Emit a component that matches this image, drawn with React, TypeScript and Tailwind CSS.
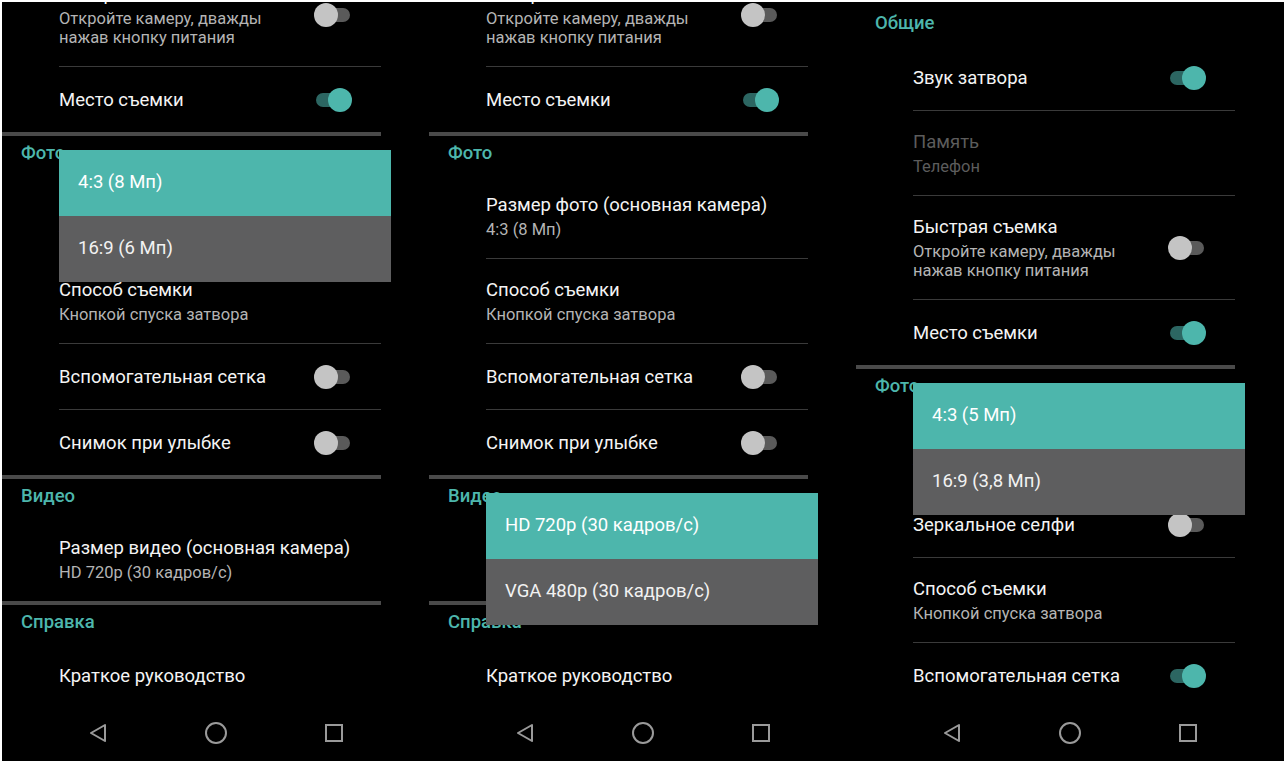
import React from 'react';

type Row = {
  title: string;
  sub?: string[];
  toggle?: 'on' | 'off';
  disabled?: boolean;
};

type Section = {
  title: string;
  rows: Row[];
};

type Screen = {
  offset: string;
  sections: Section[];
  popup: { top: string; items: string[] };
};

const font = { fontFamily: 'Roboto, "Noto Sans", "Liberation Sans", sans-serif' };

const general: Row[] = [
  { title: 'Звук затвора', toggle: 'on' },
  { title: 'Память', sub: ['Телефон'], disabled: true },
  { title: 'Быстрая съемка', sub: ['Откройте камеру, дважды', 'нажав кнопку питания'], toggle: 'off' },
  { title: 'Место съемки', toggle: 'on' },
];

const olderPhone: Section[] = [
  { title: 'Общие', rows: general },
  {
    title: 'Фото',
    rows: [
      { title: 'Размер фото (основная камера)', sub: ['4:3 (8 Мп)'] },
      { title: 'Способ съемки', sub: ['Кнопкой спуска затвора'] },
      { title: 'Вспомогательная сетка', toggle: 'off' },
      { title: 'Снимок при улыбке', toggle: 'off' },
    ],
  },
  { title: 'Видео', rows: [{ title: 'Размер видео (основная камера)', sub: ['HD 720p (30 кадров/с)'] }] },
  { title: 'Справка', rows: [{ title: 'Краткое руководство' }] },
];

const screens: Screen[] = [
  {
    offset: '-mt-[233px]',
    sections: olderPhone,
    popup: { top: 'top-[148px]', items: ['4:3 (8 Мп)', '16:9 (6 Мп)'] },
  },
  {
    offset: '-mt-[233px]',
    sections: olderPhone,
    popup: { top: 'top-[491px]', items: ['HD 720p (30 кадров/с)', 'VGA 480p (30 кадров/с)'] },
  },
  {
    offset: 'mt-0',
    sections: [
      { title: 'Общие', rows: general },
      {
        title: 'Фото',
        rows: [
          { title: 'Размер фото (основная камера)', sub: ['4:3 (5 Мп)'] },
          { title: 'Зеркальное селфи', toggle: 'off' },
          { title: 'Способ съемки', sub: ['Кнопкой спуска затвора'] },
          { title: 'Вспомогательная сетка', toggle: 'on' },
        ],
      },
    ],
    popup: { top: 'top-[381px]', items: ['4:3 (5 Мп)', '16:9 (3,8 Мп)'] },
  },
];

const Toggle = ({ on }: { on: boolean }) => (
  <div className="relative w-[38px] h-[24px] shrink-0">
    <div className={`absolute left-[2px] right-[2px] top-[5px] h-[14px] rounded-full ${on ? 'bg-[#2c6662]' : 'bg-[#5a5a5a]'}`} />
    <div className={`absolute top-0 w-[24px] h-[24px] rounded-full ${on ? 'right-0 bg-[#4db6ac]' : 'left-0 bg-[#c4c4c4]'}`} />
  </div>
);

const SettingRow = ({ row }: { row: Row }) => {
  const lines = row.sub ? row.sub.length : 0;
  const h = lines === 0 ? 'h-[65px]' : lines === 1 ? 'h-[84px]' : 'h-[103px]';
  return (
    <div className={`${h} flex items-center pl-[57px] pr-[29px]`}>
      <div className="flex-1 min-w-0">
        <div className={`text-[18.5px] leading-[22px] whitespace-nowrap ${row.disabled ? 'text-[#5c5c5c]' : 'text-[#f4f4f4]'}`}>{row.title}</div>
        {row.sub && (
          <div className="mt-[4px]">
            {row.sub.map((s) => (
              <div key={s} className={`text-[16.5px] leading-[19px] whitespace-nowrap ${row.disabled ? 'text-[#5c5c5c]' : 'text-[#b4b4b4]'}`}>{s}</div>
            ))}
          </div>
        )}
      </div>
      {row.toggle && <Toggle on={row.toggle === 'on'} />}
    </div>
  );
};

const NavBar = () => (
  <div className="h-[56px] shrink-0 flex justify-center items-center">
    <div className="w-[118px] flex justify-center">
      <svg width="22" height="22" viewBox="0 0 22 22" fill="none" stroke="#9a9a9a" strokeWidth="2" strokeLinejoin="round">
        <path d="M18 3 L4 11 L18 19 Z" />
      </svg>
    </div>
    <div className="w-[118px] flex justify-center">
      <svg width="24" height="24" viewBox="0 0 24 24" fill="none" stroke="#9a9a9a" strokeWidth="2">
        <circle cx="12" cy="12" r="10" />
      </svg>
    </div>
    <div className="w-[118px] flex justify-center">
      <svg width="20" height="20" viewBox="0 0 20 20" fill="none" stroke="#9a9a9a" strokeWidth="2">
        <rect x="2" y="2" width="16" height="16" />
      </svg>
    </div>
  </div>
);

const Phone = ({ screen, width }: { screen: Screen; width: string }) => (
  <div className={`${width} h-full relative flex flex-col overflow-hidden bg-black`}>
    <div className="flex-1 overflow-hidden">
      <div className={`${screen.offset} w-[379px]`}>
        {screen.sections.map((sec, si) => (
          <div key={sec.title}>
            {si === 0 ? (
              <div className="h-[43px] pt-[11px] pl-[19px] text-[18.5px] leading-[20px] font-medium text-[#4db6ac]">{sec.title}</div>
            ) : (
              <>
                <div className="h-[4px] bg-[#4a4a4a]" />
                <div className="h-[38px] pt-[7px] pl-[19px] text-[18.5px] leading-[20px] font-medium text-[#4db6ac]">{sec.title}</div>
              </>
            )}
            {sec.rows.map((row, ri) => (
              <div key={row.title}>
                {ri > 0 && <div className="ml-[57px] h-[1px] bg-[#3a3a3a]" />}
                <SettingRow row={row} />
              </div>
            ))}
          </div>
        ))}
      </div>
    </div>
    <NavBar />
    <div className={`absolute left-[57px] w-[332px] ${screen.popup.top}`}>
      {screen.popup.items.map((it, i) => (
        <div key={it} className={`h-[66px] flex items-center pl-[19px] text-[18.5px] ${i === 0 ? 'bg-[#4db6ac] text-white' : 'bg-[#5e5e5f] text-[#f2f2f2]'}`}>
          {it}
        </div>
      ))}
    </div>
  </div>
);

export default function App() {
  return (
    <div className="w-[1284px] h-[763px] bg-white pt-[2px] pl-[2px] pb-[2px] overflow-hidden" style={font}>
      <div className="h-full flex bg-black">
        <Phone screen={screens[0]} width="w-[427px]" />
        <Phone screen={screens[1]} width="w-[427px]" />
        <Phone screen={screens[2]} width="w-[428px]" />
      </div>
    </div>
  );
}
